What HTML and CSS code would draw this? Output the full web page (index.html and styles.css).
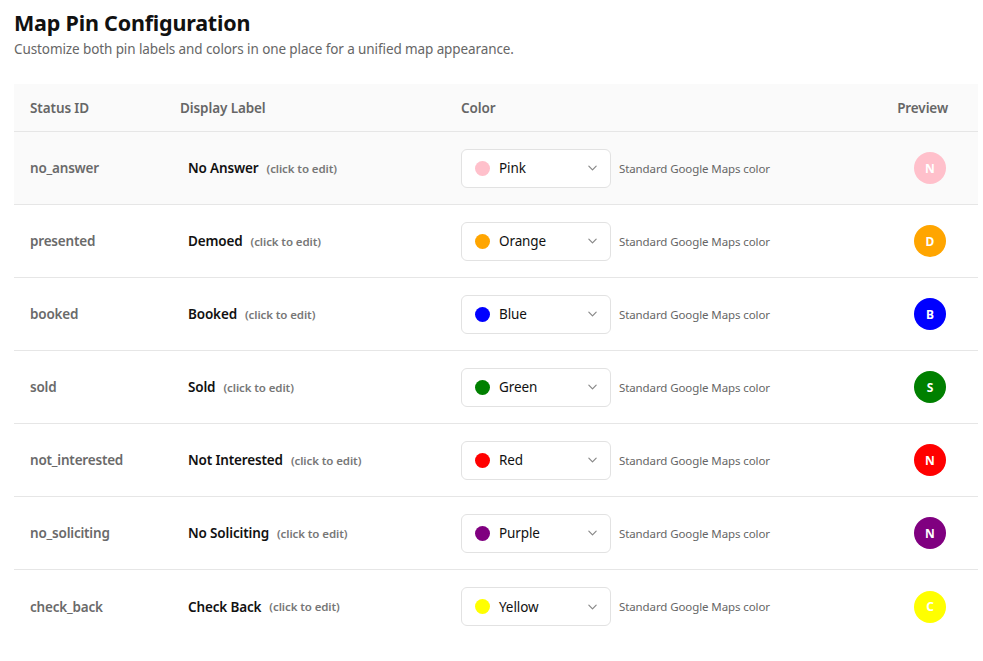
FILE: index.html
```html
<!DOCTYPE html>
<html>
<head>
<meta charset="utf-8">
<link rel="stylesheet" href="styles.css">
</head>
<body>
<div class="page">
  <h1 class="title">Map Pin Configuration</h1>
  <p class="subtitle">Customize both pin labels and colors in one place for a unified map appearance.</p>
  <div class="table">
    <div class="row head">
      <div class="cell">Status ID</div>
      <div class="cell">Display Label</div>
      <div class="cell">Color</div>
      <div class="cell preview">Preview</div>
    </div>
    <div class="row hover">
      <div class="cell sid">no_answer</div>
      <div class="cell"><span class="label">No Answer</span><span class="hint">(click to edit)</span></div>
      <div class="cell colorcell"><div class="select"><span class="dot" style="background:#ffc0cb"></span><span class="cname">Pink</span><svg class="chev" viewBox="0 0 12 8"><path d="M2 2l4 4 4-4"/></svg></div><span class="std">Standard Google Maps color</span></div>
      <div class="cell preview"><span class="pin" style="background:#ffc0cb">N</span></div>
    </div>
    <div class="row">
      <div class="cell sid">presented</div>
      <div class="cell"><span class="label">Demoed</span><span class="hint">(click to edit)</span></div>
      <div class="cell colorcell"><div class="select"><span class="dot" style="background:#ffa500"></span><span class="cname">Orange</span><svg class="chev" viewBox="0 0 12 8"><path d="M2 2l4 4 4-4"/></svg></div><span class="std">Standard Google Maps color</span></div>
      <div class="cell preview"><span class="pin" style="background:#ffa500">D</span></div>
    </div>
    <div class="row">
      <div class="cell sid">booked</div>
      <div class="cell"><span class="label">Booked</span><span class="hint">(click to edit)</span></div>
      <div class="cell colorcell"><div class="select"><span class="dot" style="background:#0000ff"></span><span class="cname">Blue</span><svg class="chev" viewBox="0 0 12 8"><path d="M2 2l4 4 4-4"/></svg></div><span class="std">Standard Google Maps color</span></div>
      <div class="cell preview"><span class="pin" style="background:#0000ff">B</span></div>
    </div>
    <div class="row">
      <div class="cell sid">sold</div>
      <div class="cell"><span class="label">Sold</span><span class="hint">(click to edit)</span></div>
      <div class="cell colorcell"><div class="select"><span class="dot" style="background:#008000"></span><span class="cname">Green</span><svg class="chev" viewBox="0 0 12 8"><path d="M2 2l4 4 4-4"/></svg></div><span class="std">Standard Google Maps color</span></div>
      <div class="cell preview"><span class="pin" style="background:#008000">S</span></div>
    </div>
    <div class="row">
      <div class="cell sid">not_interested</div>
      <div class="cell"><span class="label">Not Interested</span><span class="hint">(click to edit)</span></div>
      <div class="cell colorcell"><div class="select"><span class="dot" style="background:#ff0000"></span><span class="cname">Red</span><svg class="chev" viewBox="0 0 12 8"><path d="M2 2l4 4 4-4"/></svg></div><span class="std">Standard Google Maps color</span></div>
      <div class="cell preview"><span class="pin" style="background:#ff0000">N</span></div>
    </div>
    <div class="row">
      <div class="cell sid">no_soliciting</div>
      <div class="cell"><span class="label">No Soliciting</span><span class="hint">(click to edit)</span></div>
      <div class="cell colorcell"><div class="select"><span class="dot" style="background:#800080"></span><span class="cname">Purple</span><svg class="chev" viewBox="0 0 12 8"><path d="M2 2l4 4 4-4"/></svg></div><span class="std">Standard Google Maps color</span></div>
      <div class="cell preview"><span class="pin" style="background:#800080">N</span></div>
    </div>
    <div class="row last">
      <div class="cell sid">check_back</div>
      <div class="cell"><span class="label">Check Back</span><span class="hint">(click to edit)</span></div>
      <div class="cell colorcell"><div class="select"><span class="dot" style="background:#ffff00"></span><span class="cname">Yellow</span><svg class="chev" viewBox="0 0 12 8"><path d="M2 2l4 4 4-4"/></svg></div><span class="std">Standard Google Maps color</span></div>
      <div class="cell preview"><span class="pin" style="background:#ffff00">C</span></div>
    </div>
  </div>
</div>
</body>
</html>
```

FILE: styles.css
```css
* { box-sizing: border-box; }
html, body { margin: 0; padding: 0; background: #fff; }
body {
  font-family: "Noto Sans", "Open Sans", sans-serif;
  color: #111;
}
.page { padding: 8px 5px 0 14px; }
.title {
  margin: 0;
  font-size: 21.5px;
  font-weight: 700;
  line-height: 30px;
  color: #111;
  letter-spacing: -0.2px;
}
.subtitle {
  margin: 2px 0 0 0;
  font-size: 13.5px;
  line-height: 18px;
  color: #666;
  letter-spacing: -0.1px;
}
.table { margin-top: 26px; }
.row {
  display: grid;
  grid-template-columns: 166px 281px 1fr 120px;
  height: 73px;
  border-bottom: 1px solid #e6e6e6;
  align-items: center;
}
.row.last { border-bottom: none; }
.row.head {
  height: 48px;
  background: #fafafa;
  font-size: 13.5px;
  font-weight: 600;
  color: #666;
  letter-spacing: -0.1px;
}
.row.hover { background: #fafafa; }
.cell { padding-left: 16px; display: flex; align-items: center; }
.head .cell:nth-child(3), .colorcell { padding-left: 0; }
.head .cell:nth-child(2) { padding-left: 0; }
.row > .cell:nth-child(2) { padding-left: 0; }
.head .cell.preview { justify-content: flex-end; padding-right: 30px; }
.cell.preview { justify-content: flex-end; padding-right: 32px; }
.sid {
  font-size: 13.5px;
  font-weight: 600;
  color: #6a6a6a;
  letter-spacing: -0.2px;
}
.label {
  margin-left: 8px;
  font-size: 13.5px;
  font-weight: 600;
  color: #111;
  letter-spacing: -0.15px;
}
.hint {
  margin-left: 8px;
  font-size: 11.5px;
  font-weight: 600;
  color: #777;
  letter-spacing: -0.1px;
}
.colorcell { gap: 8px; }
.select {
  width: 150px;
  height: 39px;
  border: 1px solid #e2e2e2;
  border-radius: 6px;
  background: #fff;
  display: flex;
  align-items: center;
  padding-left: 13px;
  padding-right: 12px;
}
.dot {
  width: 15px;
  height: 15px;
  border-radius: 50%;
  flex: none;
}
.cname {
  margin-left: 9px;
  font-size: 13.5px;
  color: #111;
  flex: 1;
  letter-spacing: -0.1px;
}
.chev {
  width: 11px;
  height: 8px;
  fill: none;
  stroke: #888;
  stroke-width: 1.3;
  stroke-linecap: round;
  stroke-linejoin: round;
}
.std {
  font-size: 11.5px;
  color: #666;
  letter-spacing: -0.1px;
}
.pin {
  width: 32px;
  height: 32px;
  border-radius: 50%;
  color: #fff;
  font-size: 12px;
  font-weight: 700;
  display: flex;
  align-items: center;
  justify-content: center;
}
```
